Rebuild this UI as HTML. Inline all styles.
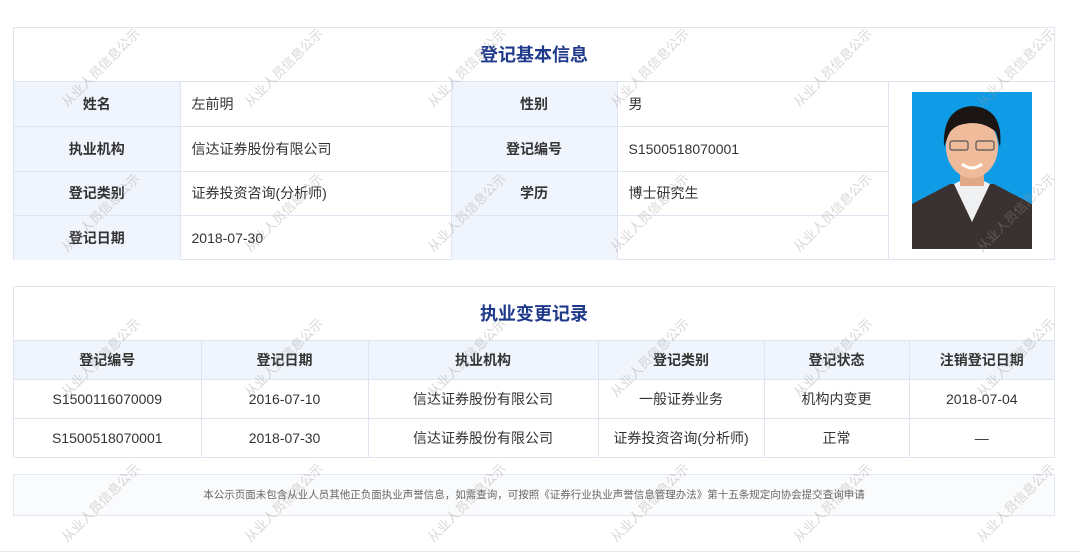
<!DOCTYPE html>
<html><head><meta charset="utf-8">
<style>
*{margin:0;padding:0;box-sizing:border-box}
body{width:1080px;height:554px;background:#fff;position:relative;overflow:hidden;font-family:"Liberation Sans","Noto Sans CJK SC",sans-serif;color:#333;font-size:14px}
.box{position:absolute;left:13px;width:1042px;border:1px solid #dfe5f0;background:#fff}
.title{height:54px;line-height:54px;text-align:center;font-size:18px;font-weight:bold;color:#1f3a8a;border-bottom:1px solid #dfe5f0}
table{border-collapse:collapse;width:100%;table-layout:fixed}
td,th{border:1px solid #dfe5f0;font-size:14px}
th{background:#f0f5fd;font-weight:bold;color:#333}
.t1 td,.t1 th{height:44.5px}
.t1 th{text-align:center}
.t1 td{padding-left:11px}
.t2 td,.t2 th{text-align:center;height:38.5px}
table tr:first-child td,table tr:first-child th{border-top:none}
table td:first-child,table th:first-child{border-left:none}
table td:last-child,table th:last-child{border-right:none}
table tr:last-child td,table tr:last-child th{border-bottom:none}
.foot{position:absolute;left:13px;top:474px;width:1042px;height:42px;border:1px solid #e3e7ef;background:#fafbfc;text-align:center;line-height:40px;font-size:10.5px;color:#666}
.wm{position:absolute;font-size:13px;color:rgba(150,150,150,.38);transform:translate(-50%,-50%) rotate(-45deg);white-space:nowrap;pointer-events:none}
.bot{position:absolute;left:0;top:551px;width:1080px;height:1px;background:#e6e9ef}
</style></head><body>
<div class="box" style="top:27px;height:233px">
<div class="title">登记基本信息</div>
<table class="t1">
<colgroup><col style="width:166px"><col style="width:271px"><col style="width:166px"><col style="width:271px"><col></colgroup>
<tr><th>姓名</th><td>左前明</td><th>性别</th><td>男</td><td rowspan="4" style="padding:0;position:relative;border-bottom:none">
<svg width="120" height="157" viewBox="0 0 120 157" style="position:absolute;left:23px;top:10px">
<rect width="120" height="157" fill="#109be6"/>
<path d="M0 112 L38 92 L82 92 L120 112 L120 157 L0 157Z" fill="#3a3230"/>
<path d="M42 92 L60 130 L78 92 L70 88 L50 88Z" fill="#eef0f2"/>
<rect x="48" y="76" width="24" height="18" fill="#e0a888"/>
<ellipse cx="60" cy="55" rx="26" ry="31" fill="#f0bb9a"/>
<path d="M32 55 Q30 16 60 14 Q92 16 88 55 L84 40 Q70 28 52 32 Q40 34 36 44Z" fill="#1b1614"/>
<rect x="38" y="49" width="18" height="9" rx="2" fill="none" stroke="#555" stroke-width="1.2"/>
<rect x="64" y="49" width="18" height="9" rx="2" fill="none" stroke="#555" stroke-width="1.2"/>
<path d="M50 72 Q60 80 70 72" stroke="#fff" stroke-width="3" fill="none"/>
</svg></td></tr>
<tr><th>执业机构</th><td>信达证券股份有限公司</td><th>登记编号</th><td>S1500518070001</td></tr>
<tr><th>登记类别</th><td>证券投资咨询(分析师)</td><th>学历</th><td>博士研究生</td></tr>
<tr><th>登记日期</th><td>2018-07-30</td><th></th><td></td></tr>
</table>
</div>
<div class="box" style="top:286px;height:172px">
<div class="title">执业变更记录</div>
<table class="t2">
<colgroup><col style="width:187px"><col style="width:167px"><col style="width:230px"><col style="width:166px"><col style="width:145px"><col></colgroup>
<tr><th>登记编号</th><th>登记日期</th><th>执业机构</th><th>登记类别</th><th>登记状态</th><th>注销登记日期</th></tr>
<tr><td>S1500116070009</td><td>2016-07-10</td><td>信达证券股份有限公司</td><td>一般证券业务</td><td>机构内变更</td><td>2018-07-04</td></tr>
<tr><td>S1500518070001</td><td>2018-07-30</td><td>信达证券股份有限公司</td><td>证券投资咨询(分析师)</td><td>正常</td><td>—</td></tr>
</table>
</div>
<div class="foot">本公示页面未包含从业人员其他正负面执业声誉信息，如需查询，可按照《证券行业执业声誉信息管理办法》第十五条规定向协会提交查询申请</div>
<div class="bot"></div>
<div class="wm" style="left:100px;top:67px">从业人员信息公示</div><div class="wm" style="left:283px;top:67px">从业人员信息公示</div><div class="wm" style="left:466px;top:67px">从业人员信息公示</div><div class="wm" style="left:649px;top:67px">从业人员信息公示</div><div class="wm" style="left:832px;top:67px">从业人员信息公示</div><div class="wm" style="left:1015px;top:67px">从业人员信息公示</div>
<div class="wm" style="left:100px;top:212px">从业人员信息公示</div><div class="wm" style="left:283px;top:212px">从业人员信息公示</div><div class="wm" style="left:466px;top:212px">从业人员信息公示</div><div class="wm" style="left:649px;top:212px">从业人员信息公示</div><div class="wm" style="left:832px;top:212px">从业人员信息公示</div><div class="wm" style="left:1015px;top:212px">从业人员信息公示</div>
<div class="wm" style="left:100px;top:357px">从业人员信息公示</div><div class="wm" style="left:283px;top:357px">从业人员信息公示</div><div class="wm" style="left:466px;top:357px">从业人员信息公示</div><div class="wm" style="left:649px;top:357px">从业人员信息公示</div><div class="wm" style="left:832px;top:357px">从业人员信息公示</div><div class="wm" style="left:1015px;top:357px">从业人员信息公示</div>
<div class="wm" style="left:100px;top:502px">从业人员信息公示</div><div class="wm" style="left:283px;top:502px">从业人员信息公示</div><div class="wm" style="left:466px;top:502px">从业人员信息公示</div><div class="wm" style="left:649px;top:502px">从业人员信息公示</div><div class="wm" style="left:832px;top:502px">从业人员信息公示</div><div class="wm" style="left:1015px;top:502px">从业人员信息公示</div>
</body></html>
